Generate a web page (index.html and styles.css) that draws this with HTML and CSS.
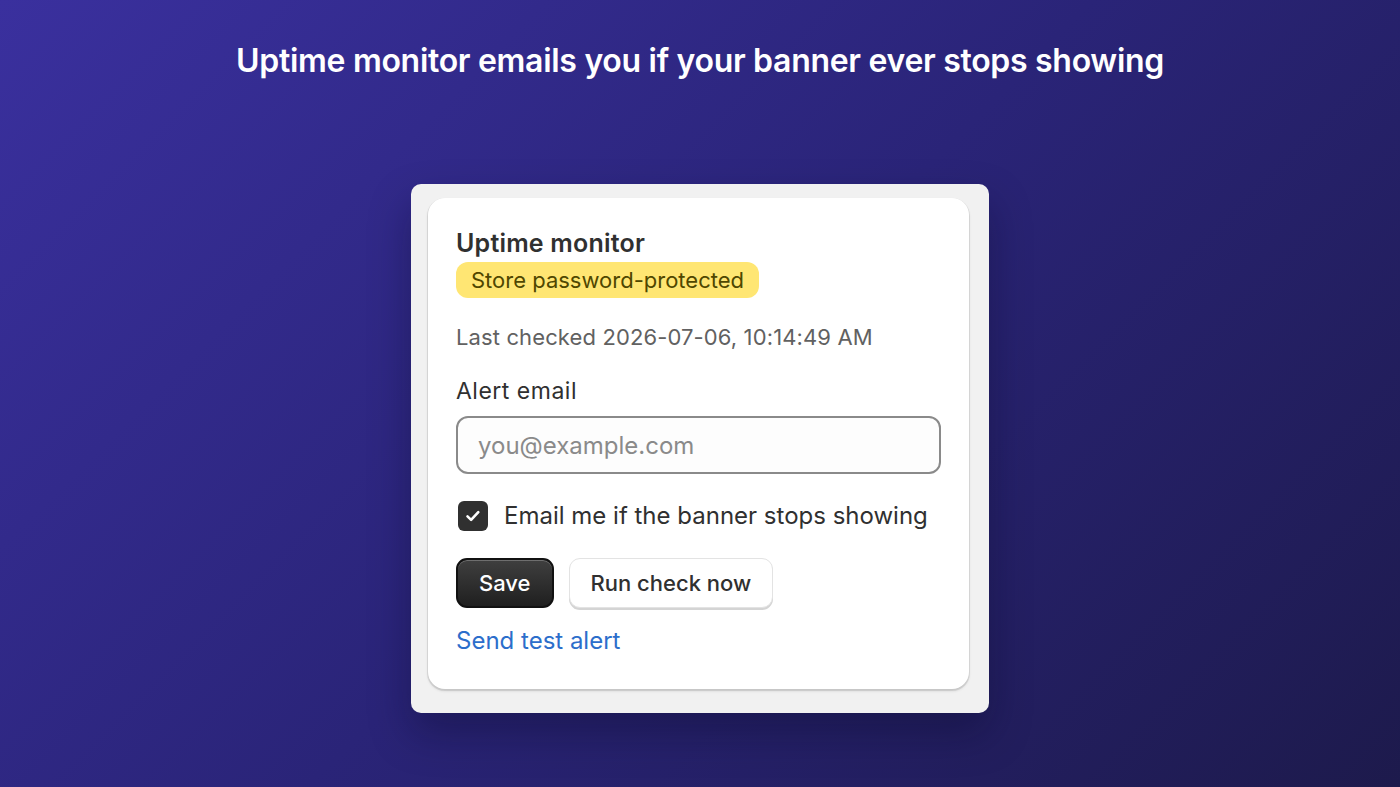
FILE: index.html
```html
<!DOCTYPE html>
<html lang="en">
<head>
    <meta charset="UTF-8">
    <meta name="viewport" content="width=device-width, initial-scale=1.0">
    <title>Uptime monitor</title>
    <link rel="stylesheet" href="styles.css">
</head>
<body>
    <h1 class="headline">Uptime monitor emails you if your banner ever stops showing</h1>
    <div class="stage">
        <div class="frame">
            <div class="card">
                <h2 class="card-title">Uptime monitor</h2>
                <span class="badge">Store password-protected</span>
                <p class="checked">Last checked 2026-07-06, 10:14:49 AM</p>
                <label class="field-label" for="alertEmail">Alert email</label>
                <input class="field" type="text" id="alertEmail" placeholder="you@example.com">
                <label class="check-row">
                    <span class="checkbox">
                        <svg width="22" height="22" viewBox="0 0 22 22"><path d="M5.5 11.4l3.6 3.5 7.2-7.7" fill="none" stroke="#fff" stroke-width="2.6" stroke-linecap="round" stroke-linejoin="round"/></svg>
                    </span>
                    Email me if the banner stops showing
                </label>
                <div class="actions">
                    <button class="btn btn-primary">Save</button>
                    <button class="btn btn-secondary">Run check now</button>
                </div>
                <a class="link" href="#">Send test alert</a>
            </div>
        </div>
    </div>
</body>
</html>
```

FILE: styles.css
```css
html, body { height: 100%; }
body { margin: 0; font-family: Inter, "Noto Sans", sans-serif; background: linear-gradient(135deg, #3a309e 0%, #2a2478 50%, #1d1a4c 100%); color: #303030; overflow: hidden; }
.headline { margin: 0; padding-top: 41px; text-align: center; color: #fff; font-size: 32px; font-weight: 600; letter-spacing: -0.3px; line-height: 40px; }
.stage { display: flex; justify-content: center; padding-top: 103px; }
.frame { width: 578px; box-sizing: border-box; background: #f1f1f1; border-radius: 10px; padding: 14px 20px 24px 17px; box-shadow: 0 20px 40px rgba(10, 8, 40, 0.35); }
.card { background: #fff; border-radius: 17px; padding: 30px 28px 33px 28px; box-shadow: 0 1px 0 1px rgba(0,0,0,0.08), 0 2px 3px rgba(0,0,0,0.12); display: flex; flex-direction: column; align-items: flex-start; }
.card-title { margin: 0; font-size: 25px; font-weight: 600; line-height: 30px; color: #303030; letter-spacing: 0.2px; }
.badge { margin-top: 4px; background: #ffe673; color: #4f4700; font-size: 22px; line-height: 36px; padding: 0 15px; border-radius: 12px; }
.checked { margin: 24px 0 0; font-size: 22px; line-height: 30px; color: #616161; letter-spacing: 0.12px; }
.field-label { margin-top: 24px; font-size: 23px; line-height: 30px; color: #303030; letter-spacing: 0.5px; }
.field { margin-top: 10px; width: 100%; box-sizing: border-box; height: 58px; border: 2px solid #8a8a8a; border-radius: 12px; padding: 0 20px; font-family: inherit; font-size: 24px; color: #303030; background: #fdfdfd; }
.field::placeholder { color: #8a8a8a; }
.check-row { margin-top: 27px; display: flex; align-items: center; gap: 16px; font-size: 24px; line-height: 30px; color: #303030; }
.checkbox { width: 30px; height: 30px; margin-left: 2px; border-radius: 6px; background: #303030; display: flex; align-items: center; justify-content: center; }
.actions { margin-top: 27px; display: flex; gap: 15px; }
.btn { font-family: inherit; font-size: 22px; font-weight: 500; height: 50px; border-radius: 11px; padding: 0 21px; cursor: pointer; }
.btn-primary { background: linear-gradient(180deg, #3f3f3f 0%, #2c2c2c 60%, #1f1f1f 100%); color: #fff; border: 2px solid #111; box-shadow: inset 0 1px 0 rgba(255,255,255,0.25); }
.btn-secondary { background: #fff; color: #303030; border: 1px solid #e3e3e3; box-shadow: 0 2px 0 #d4d4d4; }
.link { margin-top: 18px; font-size: 24px; line-height: 30px; color: #2c6ecb; text-decoration: none; }
```
